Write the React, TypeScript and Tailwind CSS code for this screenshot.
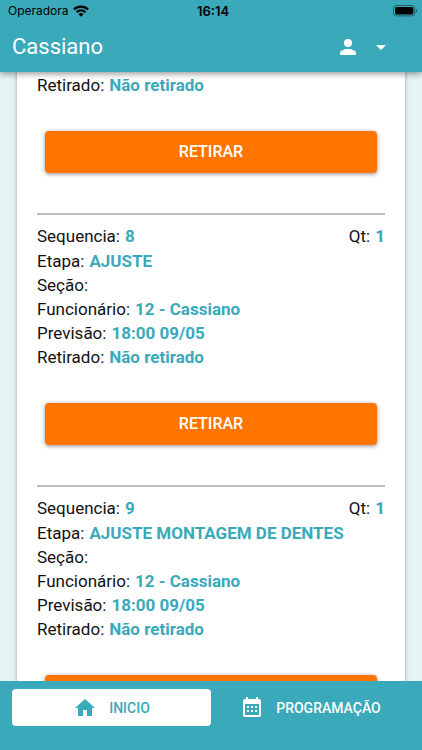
import React from 'react';
import { MdArrowDropDown, MdHome } from 'react-icons/md';

type Field = { label: string; value: string };

type Step = {
  id: number;
  qt?: string;
  fields: Field[];
};

const steps: Step[] = [
  { id: 7, fields: [{ label: 'Retirado:', value: 'Não retirado' }] },
  {
    id: 8,
    qt: '1',
    fields: [
      { label: 'Etapa:', value: 'AJUSTE' },
      { label: 'Seção:', value: '' },
      { label: 'Funcionário:', value: '12 - Cassiano' },
      { label: 'Previsão:', value: '18:00 09/05' },
      { label: 'Retirado:', value: 'Não retirado' },
    ],
  },
  {
    id: 9,
    qt: '1',
    fields: [
      { label: 'Etapa:', value: 'AJUSTE MONTAGEM DE DENTES' },
      { label: 'Seção:', value: '' },
      { label: 'Funcionário:', value: '12 - Cassiano' },
      { label: 'Previsão:', value: '18:00 09/05' },
      { label: 'Retirado:', value: 'Não retirado' },
    ],
  },
];

const AccountIcon = () => (
  <svg viewBox="0 0 24 24" className="size-6" fill="currentColor" aria-hidden="true">
    <path d="M12 4a4 4 0 0 1 4 4 4 4 0 0 1-4 4 4 4 0 0 1-4-4 4 4 0 0 1 4-4m0 10c4.42 0 8 1.79 8 4v2H4v-2c0-2.21 3.58-4 8-4z" />
  </svg>
);

const CalendarIcon = () => (
  <svg viewBox="0 0 24 24" className="size-6" fill="currentColor" aria-hidden="true">
    <path d="M9 10v2H7v-2h2m4 0v2h-2v-2h2m4 0v2h-2v-2h2m2-7a2 2 0 0 1 2 2v14a2 2 0 0 1-2 2H5a2 2 0 0 1-2-2V5a2 2 0 0 1 2-2h1V1h2v2h8V1h2v2h1m0 16V8H5v11h14M9 14v2H7v-2h2m4 0v2h-2v-2h2m4 0v2h-2v-2h2z" />
  </svg>
);

const WifiIcon = () => (
  <svg viewBox="0 0 16 12" className="h-3 w-4" aria-hidden="true">
    <g fill="none" stroke="currentColor" strokeWidth="2.2">
      <path d="M.9 4.500a10 10 0 0 1 14.200 0" />
      <path d="M3.500 7.200a6.400 6.400 0 0 1 9 0" />
    </g>
    <path d="M8 11.8 5.500 9.300a3.500 3.500 0 0 1 5 0z" fill="currentColor" />
  </svg>
);

const BatteryIcon = () => (
  <svg viewBox="0 0 25 12" className="h-3 w-[25px]" aria-hidden="true">
    <rect x="0.5" y="0.5" width="21.4" height="10.4" rx="3" fill="none" stroke="currentColor" strokeOpacity="0.45" />
    <rect x="2" y="2" width="18.4" height="7.4" rx="1.6" fill="currentColor" />
    <path d="M23.2 4v3.6c.8-.3 1.2-1 1.2-1.8s-.4-1.5-1.2-1.8z" fill="currentColor" fillOpacity="0.5" />
  </svg>
);

const StatusBar = () => (
  <div className="grid h-[22px] grid-cols-3 items-center pr-1 pl-2 leading-4 text-black font-['Inter','Liberation_Sans',sans-serif]">
    <div className="flex items-center gap-1">
      <span className="text-xs">Operadora</span>
      <WifiIcon />
    </div>
    <span className="text-center text-[13px] font-semibold">16:14</span>
    <div className="flex justify-end">
      <BatteryIcon />
    </div>
  </div>
);

const StepItem: React.FC<{ step: Step }> = ({ step }) => (
  <section className="border-t-2 border-[#bdbdbd] pt-[9px] pb-10 first:border-t-0 first:pt-px">
    {step.qt && (
      <div className="mb-px flex justify-between">
        <p className="flex gap-[5px]">
          Sequencia: <strong className="font-bold text-[#3aa9ba]">{step.id}</strong>
        </p>
        <p className="flex gap-[5px]">
          Qt: <strong className="font-bold text-[#3aa9ba]">{step.qt}</strong>
        </p>
      </div>
    )}
    <dl>
      {step.fields.map((f) => (
        <div key={f.label} className="flex gap-[5px]">
          <dt>{f.label}</dt>
          <dd className="font-bold text-[#3aa9ba]">{f.value}</dd>
        </div>
      ))}
    </dl>
    <div className="px-2 pt-[34px]">
      <button
        type="button"
        className="h-[42px] w-full rounded-sm bg-[#ff7500] text-base font-medium text-white shadow-[0_1px_4px_rgba(0,0,0,0.45)]"
      >
        RETIRAR
      </button>
    </div>
  </section>
);

const App: React.FC = () => {
  return (
    <div className="flex h-screen flex-col bg-[#e5f4f5] font-[Roboto,'Liberation_Sans',sans-serif]">
      <header className="relative z-10 bg-[#3aa9ba] shadow-[0_2px_6px_rgba(0,0,0,0.4)]">
        <StatusBar />
        <div className="flex h-[50px] items-center justify-between pr-[29px] pl-3 text-white">
          <h1 className="text-[22px] leading-7">Cassiano</h1>
          <button type="button" aria-label="Conta" className="flex items-center gap-[9px]">
            <AccountIcon />
            <MdArrowDropDown className="size-6" />
          </button>
        </div>
      </header>

      <main className="min-h-0 flex-1 overflow-y-auto px-[17px] [scrollbar-width:none]">
        <div className="bg-white px-5 text-[17px] leading-6 text-[#111] shadow-[0_0_4px_rgba(0,0,0,0.35)]">
          {steps.map((step) => (
            <StepItem key={step.id} step={step} />
          ))}
        </div>
      </main>

      <nav className="relative z-10 flex bg-[#3aa9ba] px-3 pt-2 pb-6 text-sm leading-5 font-medium">
        <button type="button" className="flex h-[37px] flex-1 items-center justify-center gap-3 rounded-sm bg-white text-[#3aa9ba]">
          <MdHome className="size-6" />
          INICIO
        </button>
        <button type="button" className="flex h-[37px] flex-1 items-center justify-center gap-3 rounded-sm text-white">
          <CalendarIcon />
          PROGRAMAÇÃO
        </button>
      </nav>
    </div>
  );
};

export default App;
